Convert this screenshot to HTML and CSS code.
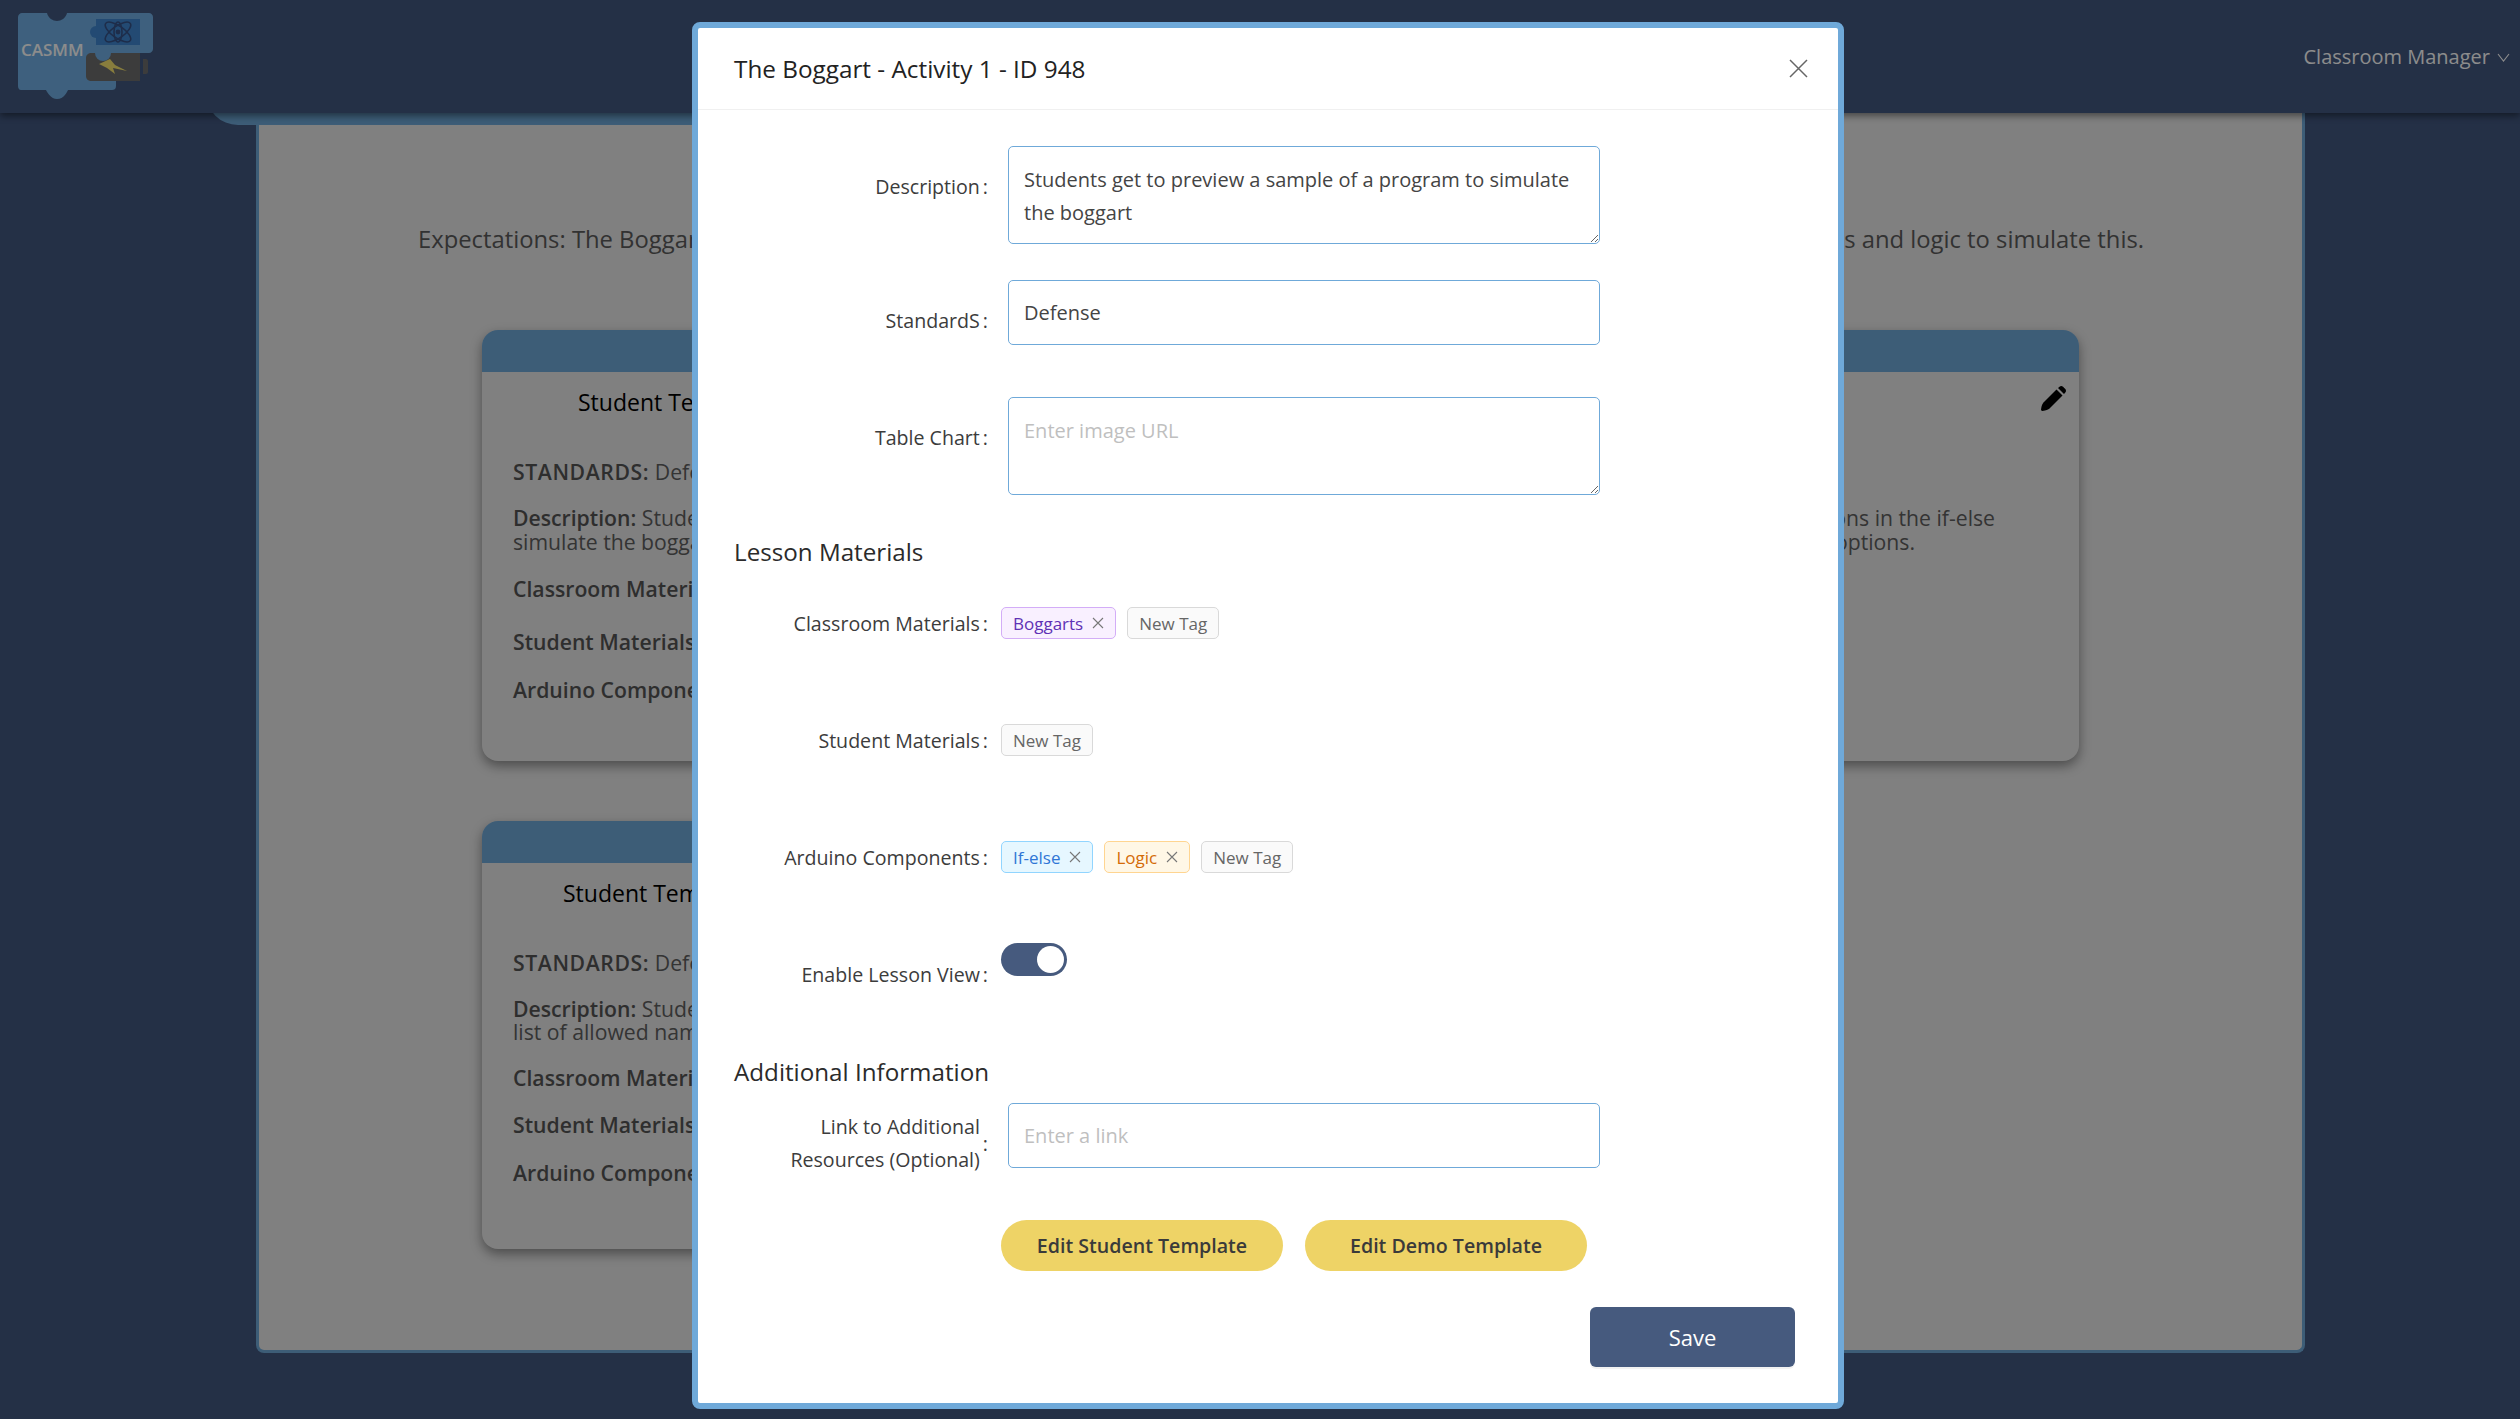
FILE: index.html
```html
<!DOCTYPE html>
<html lang="en">
<head>
<meta charset="utf-8">
<title>CASMM - Classroom Manager</title>
<link rel="stylesheet" href="styles.css">
</head>
<body>
<header class="topbar">
  <svg class="logo" viewBox="0 0 135 86" width="135" height="86" aria-label="CASMM logo">
    <path class="logo-blue" d="M4 0H29C30 5 35 8 39 8C43 8 48 5 49 0H131C133 0 135 2 135 4V36C135 38 133 40 131 40H98V67H98V73C98 76 96 77 94 77H50C49 79 46 86 39 86C33 86 29 79 28 77H3C1 77 0 75 0 73V4C0 2 2 0 4 0Z"/>
    <path class="logo-dark" d="M74 40H122V68H74C70 68 68 66 68 63V45C68 42 70 40 74 40ZM125 46H128C129 46 130 47 130 48V59C130 60 129 61 128 61H125Z"/>
    <circle class="logo-blue" cx="85" cy="40" r="8"/>
    <rect class="logo-inner" x="78" y="6" width="44" height="26"/>
    <circle class="logo-inner" cx="78" cy="19" r="6"/>
    <g class="logo-atom">
      <ellipse cx="100" cy="19" rx="15" ry="6" transform="rotate(35 100 19)"/>
      <ellipse cx="100" cy="19" rx="15" ry="6" transform="rotate(-35 100 19)"/>
      <ellipse cx="100" cy="19" rx="4" ry="10"/>
      <circle class="logo-nucleus" cx="100" cy="19" r="2.4"/>
    </g>
    <polygon class="logo-bolt" points="81,51 92,46 97,52 109,58 95,55 97,61 89,55"/>
    <text class="logo-text" x="3" y="43">CASMM</text>
  </svg>
  <button class="user-menu" type="button">Classroom Manager
    <svg width="13" height="9" viewBox="0 0 13 9"><polyline points="1,1 6.5,8 12,1"/></svg>
  </button>
</header>

<main class="page">
  <div class="tab-strip"></div>
  <section class="sheet">
    <p class="expect"><span>Expectations: The Boggart changes its shape for each</span> <span>student. Use conditionals and logic to simulate this.</span></p>

    <article class="card card-wide">
      <div class="card-bar"></div>
      <button class="edit" type="button" aria-label="Edit">
        <svg width="25" height="25" viewBox="0 0 25 25"><path d="M1 25L0 24C0 22 1 18 2.5 16.5L15.5 3.5L21.5 9.5L8.5 22.5C7 24 3 25 1 25Z"/><path d="M17 2L18.5.7C19.5-.2 21-.2 22 .7L24.3 3C25.2 4 25.2 5.5 24.3 6.5L23 8Z"/></svg>
      </button>
      <div class="card-cols">
        <div class="col">
          <h3 class="col-title title-a">Student Template</h3>
          <p class="fact fact-first"><b class="caps">STANDARDS:</b> Defense</p>
          <p class="fact"><b>Description:</b> Students get to preview a sample of a program to<br>simulate the boggart</p>
          <p class="fact fact-tall"><b>Classroom Materials:</b> Boggarts</p>
          <p class="fact fact-next"><b>Student Materials:</b></p>
          <p class="fact"><b>Arduino Components:</b> If-else, Logic</p>
        </div>
        <div class="col col-right">
          <h3 class="col-title">Demo Template</h3>
          <p class="fact fact-first"><b class="caps">STANDARDS:</b> Defense</p>
          <p class="fact fact-lines"><span class="line"><b>Description:</b> Students fill in the conditions in the if-else</span><span class="line line-short">statement to handle the listed options.</span></p>
        </div>
      </div>
    </article>

    <article class="card card-narrow">
      <div class="card-bar"></div>
      <div class="col">
        <h3 class="col-title title-b">Student Template</h3>
        <p class="fact fact-first"><b class="caps">STANDARDS:</b> Defense</p>
        <p class="fact fact-dense"><b>Description:</b> Students write a program that checks a<br>list of allowed names</p>
        <p class="fact"><b>Classroom Materials:</b></p>
        <p class="fact fact-next"><b>Student Materials:</b></p>
        <p class="fact"><b>Arduino Components:</b></p>
      </div>
    </article>
  </section>
</main>

<div class="mask"></div>

<div class="modal" role="dialog" aria-label="Edit activity">
  <div class="modal-head">
    <h2 class="modal-title">The Boggart - Activity 1 - ID 948</h2>
    <button class="close" type="button" aria-label="Close">
      <svg width="19" height="19" viewBox="0 0 19 19"><path d="M1 1L18 18M18 1L1 18"/></svg>
    </button>
  </div>
  <form class="modal-body">
    <div class="row row-input gap-a">
      <label class="label" for="desc"><span>Description</span><i>:</i></label>
      <textarea id="desc" class="field area">Students get to preview a sample of a program to simulate the boggart</textarea>
    </div>
    <div class="row row-input gap-b">
      <label class="label" for="std"><span>StandardS</span><i>:</i></label>
      <input id="std" class="field line-field" type="text" value="Defense">
    </div>
    <div class="row row-input gap-c">
      <label class="label" for="chart"><span>Table Chart</span><i>:</i></label>
      <textarea id="chart" class="field area" placeholder="Enter image URL"></textarea>
    </div>

    <h3 class="section-title gap-d">Lesson Materials</h3>

    <div class="row tag-row">
      <div class="label"><span>Classroom Materials</span><i>:</i></div>
      <div class="tags">
        <span class="tag tag-purple">Boggarts<svg viewBox="0 0 12 12"><path d="M1 1L11 11M11 1L1 11"/></svg></span>
        <span class="tag">New Tag</span>
      </div>
    </div>
    <div class="row tag-row">
      <div class="label"><span>Student Materials</span><i>:</i></div>
      <div class="tags">
        <span class="tag">New Tag</span>
      </div>
    </div>
    <div class="row tag-row tag-row-last">
      <div class="label"><span>Arduino Components</span><i>:</i></div>
      <div class="tags">
        <span class="tag tag-blue">If-else<svg viewBox="0 0 12 12"><path d="M1 1L11 11M11 1L1 11"/></svg></span>
        <span class="tag tag-orange">Logic<svg viewBox="0 0 12 12"><path d="M1 1L11 11M11 1L1 11"/></svg></span>
        <span class="tag">New Tag</span>
      </div>
    </div>
    <div class="row toggle-row">
      <div class="label"><span>Enable Lesson View</span><i>:</i></div>
      <button class="switch" type="button" role="switch" aria-checked="true"><span class="knob"></span></button>
    </div>

    <h3 class="section-title gap-e">Additional Information</h3>

    <div class="row row-link">
      <label class="label" for="link"><span>Link to Additional<br>Resources (Optional)</span><i>:</i></label>
      <input id="link" class="field line-field" type="text" placeholder="Enter a link">
    </div>
    <div class="template-actions">
      <button class="pill" type="button">Edit Student Template</button>
      <button class="pill" type="button">Edit Demo Template</button>
    </div>
    <div class="save-row">
      <button class="save" type="button">Save</button>
    </div>
  </form>
</div>
</body>
</html>
```

FILE: styles.css
```css
* { box-sizing: border-box; }
html, body { margin: 0; height: 100%; }
body {
  background: #425880;
  font-family: "Open Sans", "Noto Sans", sans-serif;
  color: #333;
  overflow: hidden;
}
button { font-family: inherit; }

/* top bar */
.topbar {
  position: relative;
  z-index: 2;
  height: 113px;
  background: #425880;
  box-shadow: 0 3px 7px rgba(0, 0, 0, .45);
  display: flex;
  justify-content: space-between;
  padding: 13px 10px 0 18px;
}
.logo { display: block; }
.logo-blue { fill: #71b0e5; }
.logo-dark { fill: #6d6d6d; }
.logo-inner { fill: #4088d1; }
.logo-atom ellipse { fill: none; stroke: #375288; stroke-width: 1.6; }
.logo-nucleus { fill: #375288; }
.logo-bolt { fill: #f7e46f; }
.logo-text { fill: #fff; font: 600 17px "Open Sans", sans-serif; }
.user-menu {
  align-self: flex-start;
  margin-top: 29px;
  padding: 0;
  border: 0;
  background: none;
  color: #fff;
  font-size: 20px;
  line-height: 30px;
  display: flex;
  align-items: center;
  gap: 7px;
}
.user-menu svg { fill: none; stroke: #fff; stroke-width: 1.1; }

/* page behind the dialog */
.page { position: relative; padding: 0 215px 0 256px; }
.tab-strip {
  position: absolute;
  z-index: 1;
  top: -28px;
  left: 206px;
  width: 1500px;
  height: 40px;
  background: #6fa9d9;
  border-radius: 0 0 32px 32px;
}
.sheet {
  height: 1240px;
  background: #e9e9e9;
  border: 3px solid #6fa9d9;
  border-top: 0;
  border-radius: 0 0 8px 8px;
  padding: 108px 0 0 223px;
}
.expect {
  display: flex;
  justify-content: space-between;
  width: 1726px;
  margin: 0 0 0 -64px;
  font-size: 23.8px;
  line-height: 36px;
  color: #5b5b5b;
}
.card {
  position: relative;
  margin-top: 73px;
  background: #e9e9e9;
  border-radius: 16px;
  box-shadow: 0 5px 12px rgba(0, 0, 0, .4);
  overflow: hidden;
}
.card-wide { width: 1597px; height: 431px; }
.card-narrow { width: 1200px; height: 428px; margin-top: 60px; }
.card-bar { height: 42px; background: #6fa9d9; }
.card-cols { display: grid; grid-template-columns: 1fr 1fr; }
.col { padding: 0 0 0 31px; }
.col-title {
  margin: 12px 0 40px;
  font-size: 23px;
  line-height: 36px;
  font-weight: 400;
  color: #000;
}
.title-a { margin-left: 65px; }
.title-b { margin-left: 50px; }
.fact {
  margin: 0 0 23px;
  font-size: 21.2px;
  line-height: 24px;
  color: #5f5f5f;
}
.fact b { font-weight: 600; color: #555; }
.fact b.caps { letter-spacing: .6px; }
.fact-first { margin-bottom: 22px; }
.fact-tall { margin-bottom: 29px; }
.fact-next { margin-bottom: 24px; }
.fact-dense { line-height: 23px; }
.fact-lines { margin-right: 84px; text-align: right; }
.line { display: block; }
.line-short { padding-right: 80px; }
.edit {
  position: absolute;
  top: 56px;
  right: 13px;
  padding: 0;
  border: 0;
  background: none;
  line-height: 0;
}

.mask {
  position: fixed;
  inset: 0;
  z-index: 10;
  background: rgba(0, 0, 0, .45);
}

/* dialog */
.modal {
  position: absolute;
  z-index: 11;
  top: 22px;
  left: 692px;
  width: 1152px;
  background: #fff;
  border: 6px solid #6fa9d9;
  border-radius: 8px;
}
.modal-head {
  height: 82px;
  border-bottom: 1px solid #f0f0f0;
  padding: 0 36px;
  display: flex;
  align-items: center;
  justify-content: space-between;
}
.modal-title { margin: 0; font-size: 24.3px; line-height: 30px; font-weight: 500; color: #222; }
.close { padding: 0; border: 0; background: none; line-height: 0; margin-right: -6px; }
.close svg { fill: none; stroke: #666; stroke-width: 1.5; }
.modal-body { padding: 36px 43px 36px 36px; }

.row { display: flex; }
.label {
  flex: none;
  width: 254px;
  display: flex;
  justify-content: flex-end;
  align-items: center;
  gap: 3px;
  font-size: 19.6px;
  line-height: 33px;
  color: #3c3c3c;
  align-self: flex-start;
}
.label i { font-style: normal; }

.field {
  display: block;
  width: 592px;
  margin-left: 20px;
  border: 1px solid #6fa9d9;
  border-radius: 5px;
  background: #fff;
  font: 20px/33px "Open Sans", "Noto Sans", sans-serif;
  color: #444;
  outline: 0;
}
.field::placeholder { color: #bfbfbf; opacity: 1; }
.area { height: 98px; padding: 16px 15px 0; }
.line-field { height: 65px; padding: 0 15px; }

.row-input .label { margin-top: 24px; }
.gap-a { margin-bottom: 36px; }
.gap-b { margin-bottom: 52px; }
.gap-c { margin-bottom: 40px; }

.section-title {
  margin: 0;
  height: 33px;
  font-size: 24.2px;
  line-height: 33px;
  font-weight: 500;
  color: #2b2b2b;
}
.gap-d { margin-bottom: 39px; }
.gap-e { margin-bottom: 15px; }

.tag-row { height: 117px; }
.tag-row-last { height: 102px; }
.tags { margin-left: 13px; display: flex; gap: 11px; }
.tag {
  height: 32px;
  display: inline-flex;
  align-items: center;
  gap: 9px;
  padding: 0 11px;
  border: 1px solid #d9d9d9;
  border-radius: 5px;
  background: #fafafa;
  font-size: 17px;
  color: #666;
}
.tag svg { width: 12px; height: 12px; fill: none; stroke: #777; stroke-width: 1.1; }
.tag-purple { background: #f9f0ff; border-color: #d3adf7; color: #5f30b5; }
.tag-blue { background: #e6f7ff; border-color: #91d5ff; color: #2f76d6; }
.tag-orange { background: #fff7e6; border-color: #ffd591; color: #d46b08; }

.toggle-row { height: 112px; }
.toggle-row .label { margin-top: 15px; }
.switch {
  margin-left: 13px;
  width: 66px;
  height: 33px;
  padding: 0 3px;
  border: 0;
  border-radius: 17px;
  background: #465a7e;
  display: flex;
  align-items: center;
  justify-content: flex-end;
}
.knob { width: 27px; height: 27px; border-radius: 50%; background: #fff; }

.row-link { height: 65px; margin-bottom: 52px; }
.row-link .label { margin-top: 7px; text-align: right; }
.template-actions { margin-left: 267px; display: flex; gap: 22px; margin-bottom: 36px; }
.pill {
  width: 282px;
  height: 51px;
  border: 0;
  border-radius: 26px;
  background: #eed366;
  font-size: 19.6px;
  font-weight: 600;
  color: #3a3a3a;
}
.save-row { display: flex; justify-content: flex-end; }
.save {
  width: 205px;
  height: 60px;
  border: 0;
  border-radius: 6px;
  background: #465a7e;
  box-shadow: 0 2px 0 rgba(0, 0, 0, .05);
  font-size: 22px;
  font-weight: 500;
  color: #fff;
}
```
